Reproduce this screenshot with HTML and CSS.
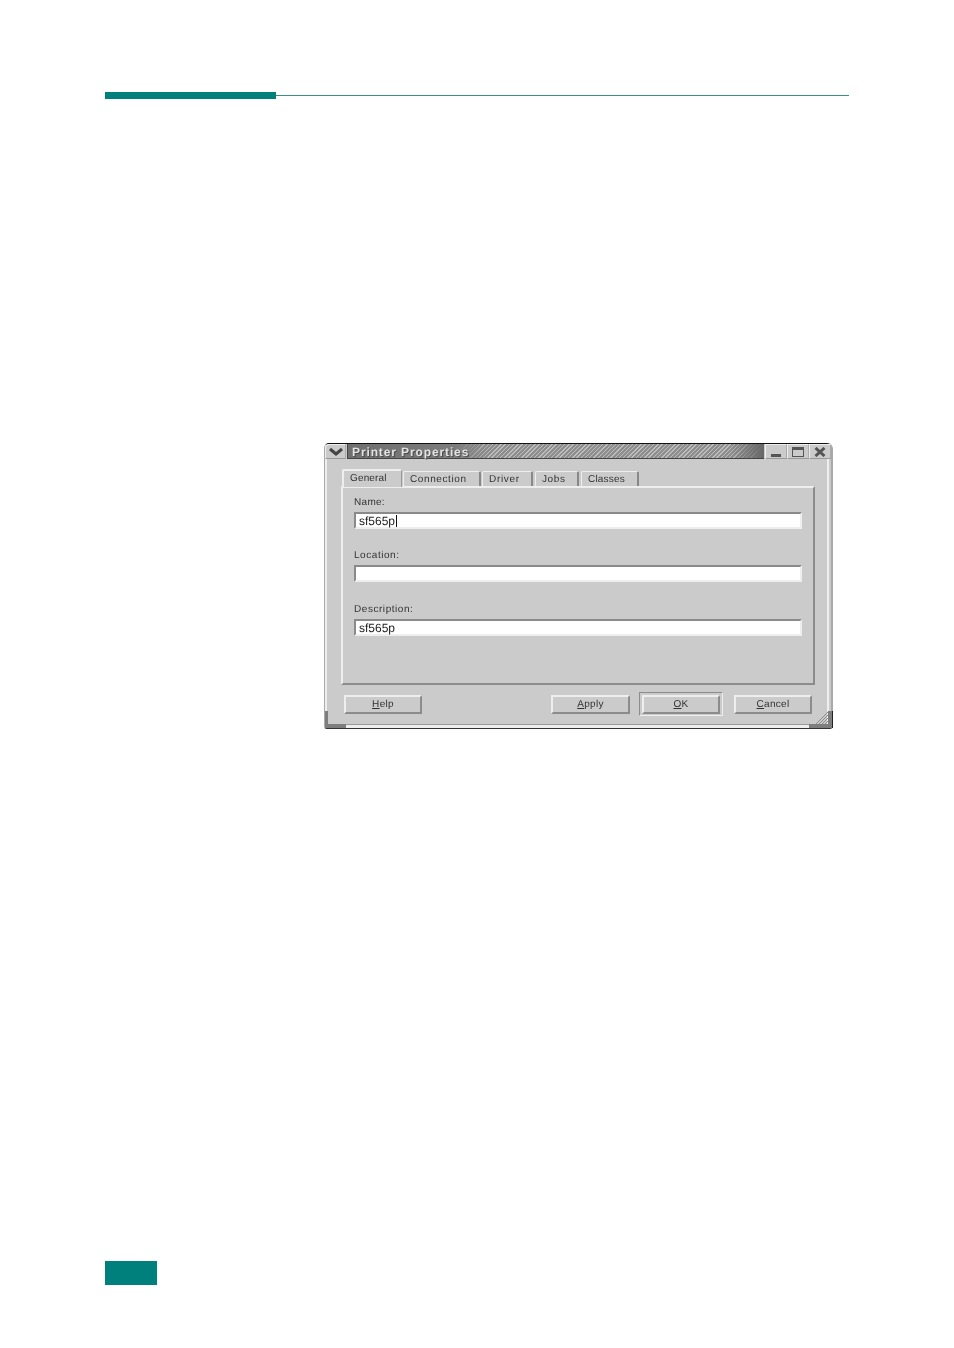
FILE: index.html
```html
<!DOCTYPE html>
<html lang="en">
<head>
<meta charset="utf-8">
<title>Printer Properties</title>
<link rel="stylesheet" href="styles.css">
</head>
<body>
<div class="page">
  <div class="rule"><div class="rule-thick"></div><div class="rule-thin"></div></div>

  <div class="window">
    <div class="titlebar">
      <div class="wm-btn wm-menu"><svg width="16" height="10" viewBox="0 0 16 10"><path d="M2 2 L8 7 L14 2" fill="none" stroke="#444" stroke-width="3"/></svg></div>
      <div class="title"><span class="title-text">Printer Properties</span></div>
      <div class="wm-btn wm-first"><svg width="12" height="10" viewBox="0 0 12 10"><rect x="1" y="7" width="10" height="3" fill="#555"/></svg></div>
      <div class="wm-btn"><svg width="12" height="10" viewBox="0 0 12 10"><rect x="0.5" y="0.5" width="11" height="9" fill="none" stroke="#555"/><rect x="0" y="0" width="12" height="3" fill="#555"/></svg></div>
      <div class="wm-btn"><svg width="12" height="10" viewBox="0 0 12 10"><path d="M1.5 1 L10.5 9 M10.5 1 L1.5 9" fill="none" stroke="#555" stroke-width="3"/></svg></div>
    </div>

    <div class="content">
      <div class="tabs">
        <div class="tab tab-active">General</div>
        <div class="tab tab-conn">Connection</div>
        <div class="tab tab-driver">Driver</div>
        <div class="tab tab-jobs">Jobs</div>
        <div class="tab tab-classes">Classes</div>
      </div>
      <div class="panel">
        <div class="field">
          <div class="label label-name">Name:</div>
          <div class="input">sf565p<span class="caret"></span></div>
        </div>
        <div class="field">
          <div class="label">Location:</div>
          <div class="input"></div>
        </div>
        <div class="field field-last">
          <div class="label">Description:</div>
          <div class="input">sf565p</div>
        </div>
      </div>
      <div class="actions">
        <div class="btn"><span><u>H</u>elp</span></div>
        <div class="spacer"></div>
        <div class="btn"><span><u>A</u>pply</span></div>
        <div class="default-ring"><div class="btn btn-ok"><span><u>O</u>K</span></div></div>
        <div class="btn btn-cancel"><span><u>C</u>ancel</span></div>
      </div>
    </div>
    <div class="grip grip-left"></div>
    <div class="grip grip-right"><svg width="23" height="17" viewBox="0 0 23 17"><path d="M19 0H23V17H0V13H19Z" fill="#7e7e7e"/><path d="M19 1L7 13M19 4L10 13M19 7L13 13M19 10L16 13" stroke="#8a8a8a" stroke-width="1" fill="none"/></svg></div>
  </div>

  <div class="page-tab"></div>
</div>
</body>
</html>
```

FILE: styles.css
```css
html, body { margin: 0; padding: 0; background: #fff; }
body { font-family: "Liberation Sans", Arial, sans-serif; text-rendering: geometricPrecision; }
.page { width: 954px; height: 1348px; overflow: hidden; padding-top: 92px; box-sizing: border-box; }

.rule { display: flex; align-items: flex-start; margin-left: 105px; width: 744px; height: 7px; }
.rule-thick { width: 171px; height: 7px; background: #00807c; }
.rule-thin { flex: 1; height: 1px; margin-top: 3px; background: #3a8f88; }

.window {
  position: relative;
  box-sizing: border-box;
  width: 509px;
  height: 286px;
  margin: 344px 0 0 324px;
  background: #cbcbcb;
  border-top: 1px solid #111;
  border-right: 2px solid #a8a8a8;
  border-bottom: 1px solid #333;
  border-left: 1px solid #aaa;
  border-radius: 5px 6px 3px 3px;
  box-shadow: inset 2px 0 0 #eee, inset -2px 0 0 #cbcbcb, inset -4px 0 0 #eee, inset 0 -3px 0 #eee, inset 0 -4px 0 #999;
  color: #333;
  filter: blur(0.3px);
}

.titlebar { display: flex; height: 15px; }
.wm-btn {
  box-sizing: border-box;
  width: 22px;
  height: 15px;
  display: flex;
  align-items: center;
  justify-content: center;
  background: #cbcbcb;
  border-top: 1px solid #eee;
  border-left: 1px solid #eee;
  border-right: 1px solid #aaa;
  border-bottom: 1px solid #999;
}
.wm-menu { width: 21px; border-radius: 4px 0 0 0; margin-right: 1px; }
.wm-first { margin-left: 1px; }
.title {
  flex: 1;
  display: flex;
  align-items: center;
  padding-left: 4px;
  border-bottom: 1px solid #444;
  border-left: 1px solid #444;
  background:
    linear-gradient(90deg, #6f6f6f 0, #7c7c7c 26%, rgba(124,124,124,0) 34%, rgba(110,110,110,0) 92%, #666 100%),
    repeating-linear-gradient(135deg, #bdbdbd 0 1px, #8e8e8e 1px 3px);
}
.title-text {
  font-size: 12px;
  font-weight: 700;
  letter-spacing: 0.88px;
  line-height: 14px;
  padding-top: 1px;
  color: #e2e2e2;
  text-shadow: 1px 1px 0 #4a4a4a;
}

.content { display: flex; flex-direction: column; padding: 10px 0 0 16px; }
.tabs { display: flex; align-items: flex-end; height: 17px; position: relative; z-index: 1; margin-left: 1px; }
.tab {
  box-sizing: border-box;
  height: 15px;
  font-size: 10px;
  line-height: 16px;
  letter-spacing: 0.6px;
  padding-left: 6px;
  border-top: 1px solid #eee;
  border-left: 1px solid #eee;
  border-right: 2px solid #888;
  border-radius: 2px 2px 0 0;
}
.tab-active { width: 60px; height: 18px; margin-right: 1px; letter-spacing: 0.15px; border-top-width: 2px; border-left-width: 2px; border-right: 1px solid #999; background: #cbcbcb; margin-bottom: -1px; }
.tab-conn { width: 78px; margin-right: 1px; }
.tab-driver { width: 51px; margin-right: 2px; letter-spacing: 0.7px; }
.tab-jobs { width: 44px; margin-right: 2px; }
.tab-classes { width: 58px; letter-spacing: 0.2px; }

.panel {
  box-sizing: border-box;
  width: 474px;
  height: 199px;
  padding: 8px 11px 0 11px;
  border-top: 2px solid #eee;
  border-left: 2px solid #eee;
  border-right: 2px solid #8c8c8c;
  border-bottom: 2px solid #8c8c8c;
  display: flex;
  flex-direction: column;
  gap: 17px;
}
.field { display: flex; flex-direction: column; height: 36px; }
.field-last { margin-top: 1px; }
.label { font-size: 10px; line-height: 13px; letter-spacing: 0.55px; height: 15px; }
.label-name { letter-spacing: 0.3px; }
.input {
  box-sizing: border-box;
  height: 17px;
  margin-top: 1px;
  width: 448px;
  background: #fff;
  border-top: 2px solid #8a8a8a;
  border-left: 2px solid #8a8a8a;
  border-right: 2px solid #eee;
  border-bottom: 2px solid #eee;
  font-size: 12px;
  line-height: 14px;
  padding-left: 3px;
  color: #222;
}
.caret { display: inline-block; width: 1px; height: 12px; margin-left: 1px; vertical-align: -2px; background: #111; }

.actions { display: flex; align-items: center; height: 24px; margin-top: 7px; padding-left: 3px; }
.spacer { flex: none; width: 129px; }
.btn {
  box-sizing: border-box;
  width: 78px;
  height: 19px;
  display: flex;
  align-items: center;
  justify-content: center;
  background: #cbcbcb;
  border-top: 2px solid #eee;
  border-left: 2px solid #eee;
  border-right: 2px solid #8c8c8c;
  border-bottom: 2px solid #8c8c8c;
  font-size: 10px;
  letter-spacing: 0.3px;
  line-height: 14px;
}
.btn span { position: relative; top: 1px; }
.spacer + .btn { width: 79px; }
.default-ring {
  box-sizing: border-box;
  width: 84px;
  height: 24px;
  margin-left: 9px;
  padding: 1px;
  border-top: 1px solid #8c8c8c;
  border-left: 1px solid #8c8c8c;
  border-right: 1px solid #eee;
  border-bottom: 1px solid #eee;
  display: flex;
  justify-content: center;
  align-items: center;
}
.btn-cancel { margin-left: 11px; }

.grip { position: absolute; bottom: 0; }
.grip-left { left: 0; width: 3px; height: 17px; background: #7e7e7e; }
.grip-left::after { content: ""; position: absolute; left: 0; bottom: 0; width: 21px; height: 4px; background: #7e7e7e; }
.grip-right { right: -1px; width: 23px; height: 17px; box-shadow: 1px 0 0 #222; }
.grip-right svg { display: block; }

.page-tab { width: 52px; height: 24px; margin: 532px 0 0 105px; background: #00807c; }
```
